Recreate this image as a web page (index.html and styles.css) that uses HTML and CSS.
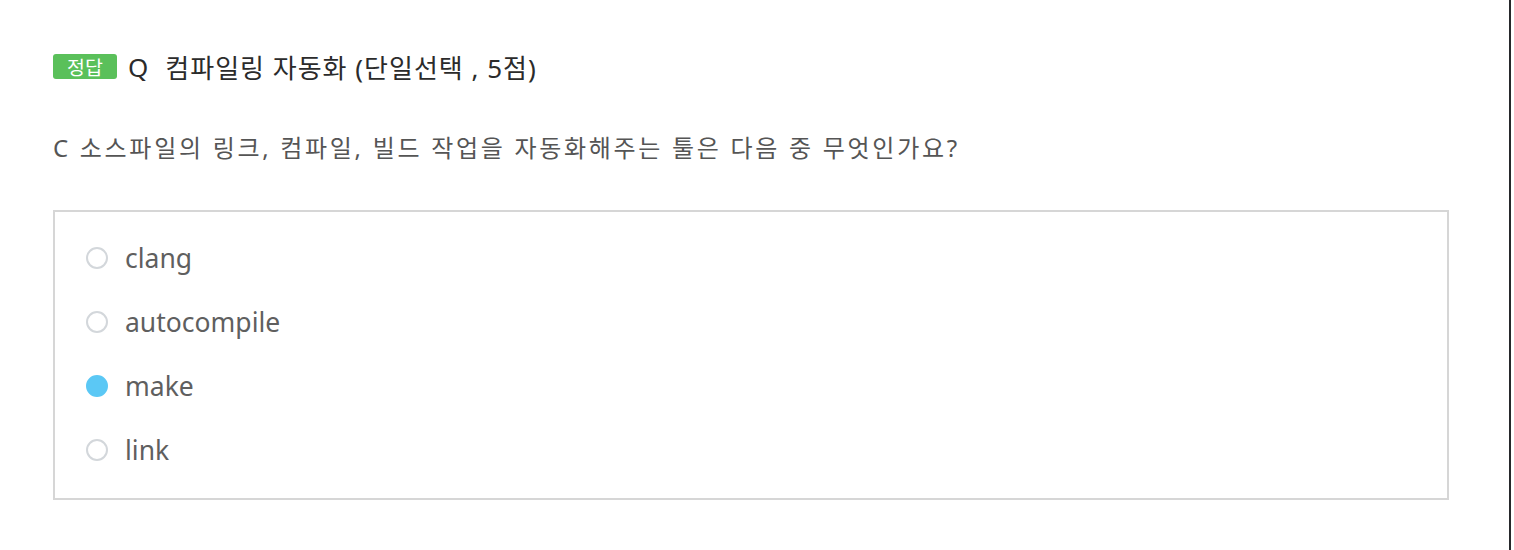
FILE: index.html
```html
<!DOCTYPE html>
<html>
<head>
  <title>컴파일링 자동화</title>
  <link rel="stylesheet" href="styles.css">
</head>
<body>
  <div class="page">
    <div class="quiz">
      <h2 class="quiz-title">
        <span class="badge">정답</span>
        <span class="q-mark">Q</span>
        <span>컴파일링 자동화 (단일선택 , 5점)</span>
      </h2>
      <p class="quiz-text">C 소스파일의 링크, 컴파일, 빌드 작업을 자동화해주는 툴은 다음 중 무엇인가요?</p>
      <ul class="choices">
        <li class="choice"><span class="radio"></span>clang</li>
        <li class="choice"><span class="radio"></span>autocompile</li>
        <li class="choice"><span class="radio checked"></span>make</li>
        <li class="choice"><span class="radio"></span>link</li>
      </ul>
    </div>
  </div>
</body>
</html>
```
FILE: styles.css
```css
body {
  margin: 0;
  background: #fff;
  font-family: "Noto Sans", "Noto Sans CJK KR", sans-serif;
}
.page {
  width: 1509px;
  height: 550px;
  border-right: 2px solid #26282b;
}
.quiz {
  padding: 54px 0 0 53px;
}
.quiz-title {
  display: flex;
  align-items: center;
  margin: 0;
  font-size: 26px;
  font-weight: normal;
  letter-spacing: 1px;
  color: #2b2b2b;
  height: 25px;
}
.badge {
  display: inline-flex;
  align-items: center;
  justify-content: center;
  width: 64px;
  height: 25px;
  background: #5ac05a;
  color: #fff;
  font-size: 19.5px;
  letter-spacing: 0;
  border-radius: 3px;
  margin-right: 11px;
}
.q-mark {
  margin-right: 16px;
}
.quiz-text {
  margin: 54px 0 0;
  font-size: 24px;
  letter-spacing: 2.7px;
  color: #555;
  line-height: 30px;
}
.choices {
  list-style: none;
  margin: 47px 0 0;
  padding: 14px 0 16px 31px;
  width: 1361px;
  border: 2px solid #d6d6d6;
}
.choice {
  display: flex;
  align-items: center;
  height: 64px;
  font-size: 26.5px;
  color: #5f5f5f;
}
.radio {
  width: 22px;
  height: 22px;
  border: 2px solid #d3d7db;
  border-radius: 50%;
  margin-right: 17px;
  box-sizing: border-box;
}
.radio.checked {
  background: #5bc8f5;
  border-color: #5bc8f5;
}
```
